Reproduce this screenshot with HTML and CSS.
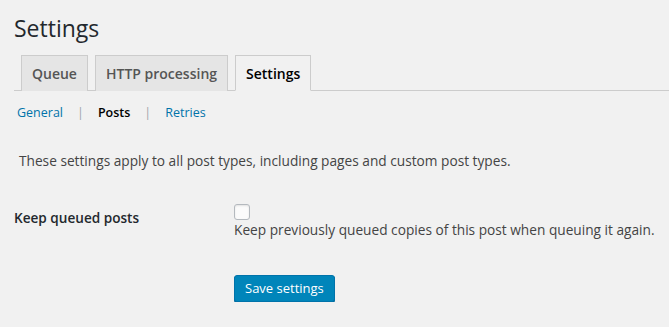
FILE: index.html
```html
<!DOCTYPE html>
<html>
<head>
<meta charset="utf-8">
<link rel="stylesheet" href="styles.css">
</head>
<body>
<div class="wrap">
  <h1 class="title">Settings</h1>
  <nav class="tabs">
    <a class="tab">Queue</a>
    <a class="tab">HTTP processing</a>
    <a class="tab active">Settings</a>
  </nav>
  <ul class="subnav">
    <li><a class="link">General</a><span class="sep">|</span></li>
    <li><a class="current">Posts</a><span class="sep">|</span></li>
    <li><a class="link">Retries</a></li>
  </ul>
  <p class="intro">These settings apply to all post types, including pages and custom post types.</p>
  <div class="row">
    <div class="label">Keep queued posts</div>
    <div class="field">
      <span class="checkbox"></span>
      <div class="desc">Keep previously queued copies of this post when queuing it again.</div>
    </div>
  </div>
  <div class="actions">
    <button class="button">Save settings</button>
  </div>
</div>
</body>
</html>
```

FILE: styles.css
```css
html, body {
  margin: 0;
  padding: 0;
  background: #f1f1f1;
}
body {
  font-family: "Open Sans", "Noto Sans", sans-serif;
  font-size: 13.7px;
  color: #444;
}
.wrap {
  padding: 0 0 0 14px;
}
.title {
  margin: 0;
  padding: 14px 0 0 0;
  font-size: 23px;
  font-weight: 400;
  line-height: 29px;
  color: #23282d;
}
.tabs {
  margin-top: 12px;
  display: flex;
  gap: 7px;
  padding-left: 7px;
  border-bottom: 1px solid #ccc;
  height: 35px;
}
.tab {
  box-sizing: border-box;
  height: 36px;
  padding: 0 10px;
  border: 1px solid #ccc;
  border-bottom: none;
  background: #e5e5e5;
  color: #555;
  font-size: 14px;
  font-weight: 600;
  line-height: 35px;
}
.tab.active {
  background: #f1f1f1;
  color: #000;
  border-bottom: 1px solid #f1f1f1;
}
.subnav {
  list-style: none;
  margin: 12px 0 0 0;
  padding: 0 0 0 3px;
  display: flex;
  line-height: 20px;
  font-size: 12.5px;
}
.link { color: #0073aa; }
.current { color: #000; font-weight: 600; }
.sep { color: #a0a5aa; padding: 0 14px; }
.intro {
  margin: 28px 0 0 5px;
  line-height: 20px;
}
.row {
  display: flex;
  margin-top: 33px;
}
.label {
  width: 220px;
  font-weight: 600;
  font-size: 13.6px;
  color: #23282d;
  padding-top: 4px;
}
.field {
  display: flex;
  flex-direction: column;
}
.checkbox {
  box-sizing: border-box;
  width: 16px;
  height: 16px;
  border: 1px solid #b4b9be;
  border-radius: 3px;
  background: #fbfbfb;
  box-shadow: inset 0 1px 2px rgba(0,0,0,.1);
}
.desc {
  margin-top: 0;
  line-height: 20px;
}
.actions {
  padding-left: 220px;
  margin-top: 35px;
}
.button {
  font-family: inherit;
  font-size: 13px;
  color: #fff;
  background: #0085ba;
  border: 1px solid #0073aa;
  border-radius: 3px;
  box-shadow: 0 1px 0 #006799;
  height: 27px;
  padding: 0 10px;
  line-height: 25px;
}
```
